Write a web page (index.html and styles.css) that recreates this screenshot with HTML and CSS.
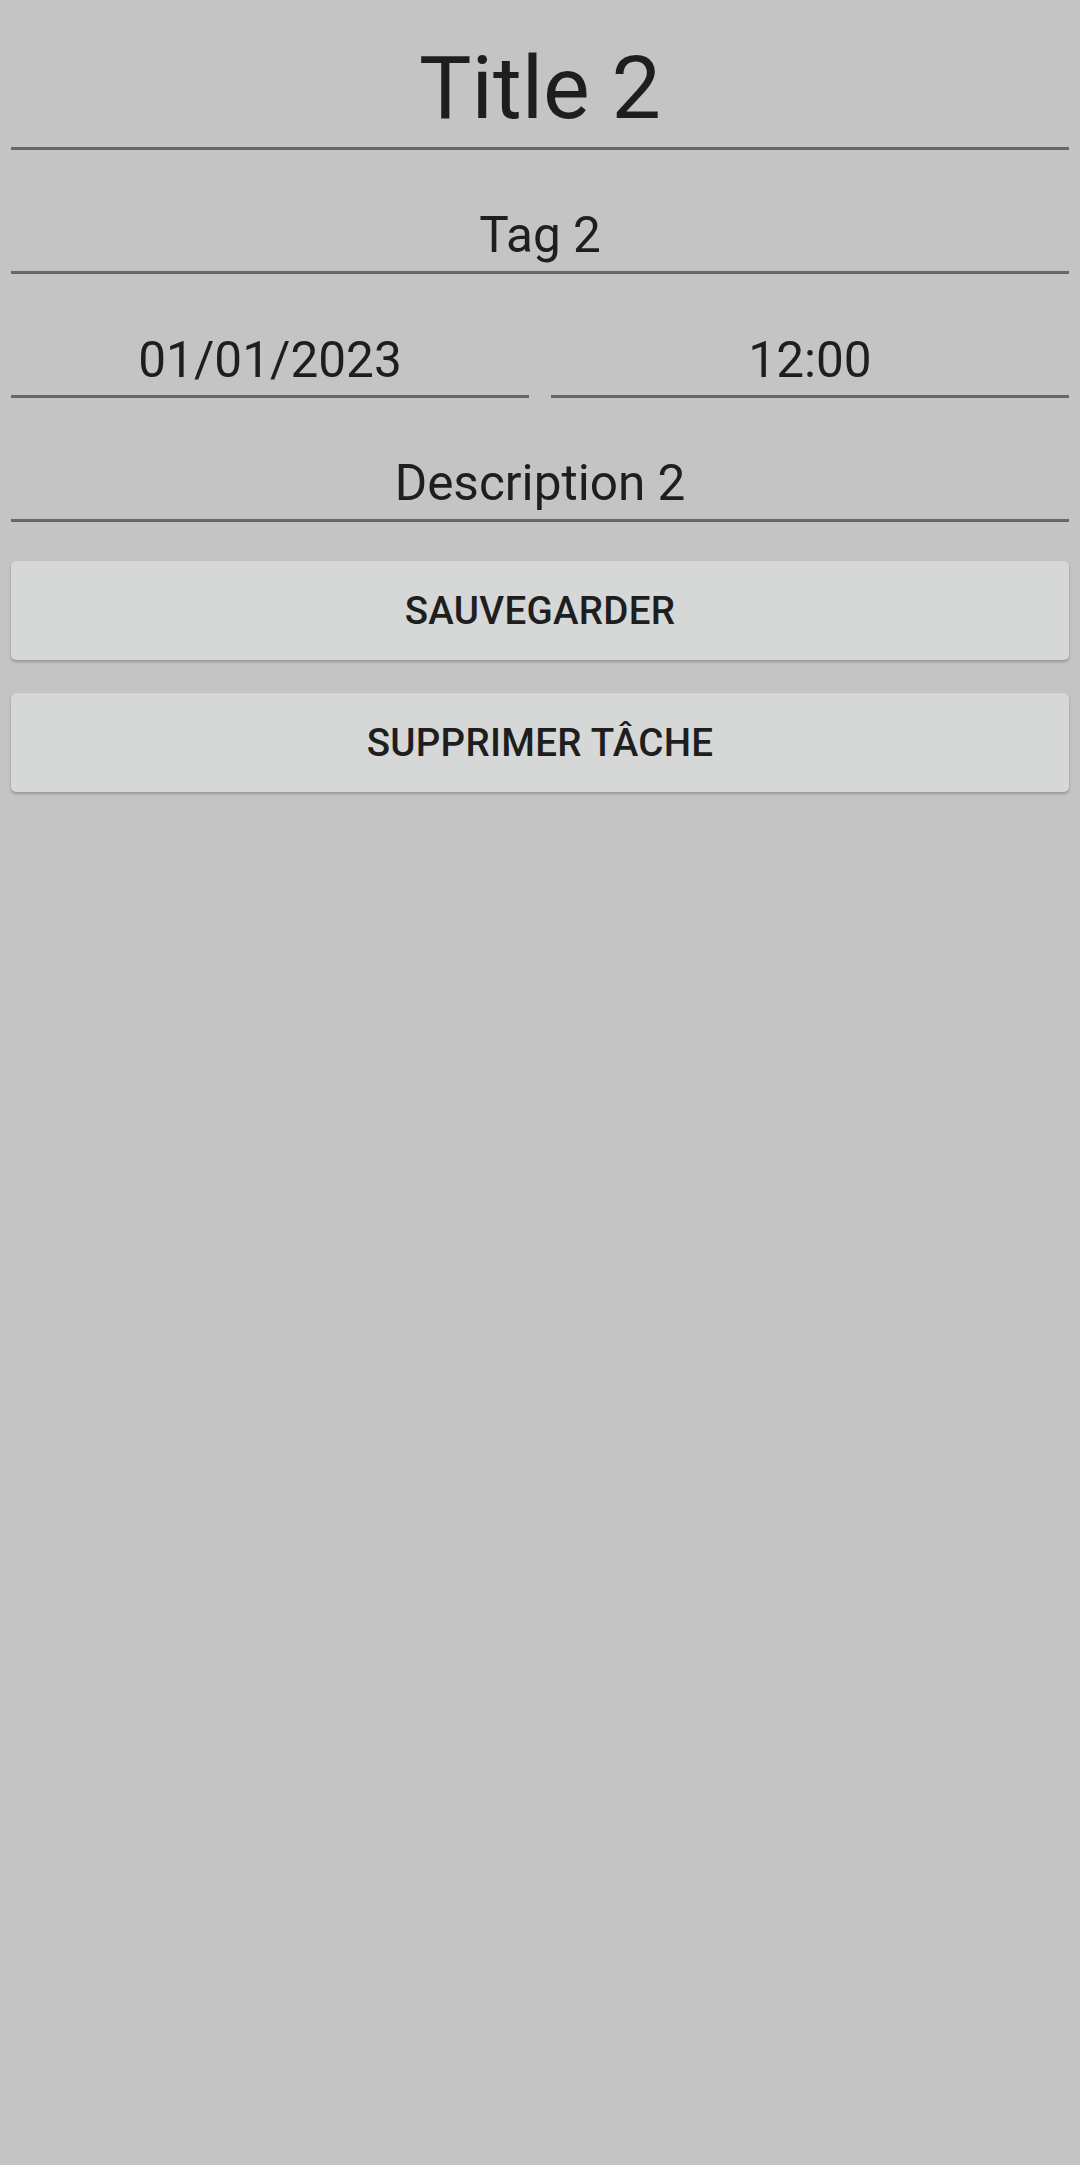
FILE: index.html
```html
<!DOCTYPE html>
<html lang="fr">
<head>
<meta charset="utf-8">
<title>Tâche</title>
<link rel="stylesheet" href="styles.css">
</head>
<body>
<main class="form">
  <div class="field field-title"><span class="value title">Title 2</span></div>
  <div class="field field-tag"><span class="value">Tag 2</span></div>
  <div class="row">
    <div class="field field-date"><span class="value">01/01/2023</span></div>
    <div class="field field-date"><span class="value">12:00</span></div>
  </div>
  <div class="field field-desc"><span class="value">Description 2</span></div>
  <button class="btn btn-save" type="button">SAUVEGARDER</button>
  <button class="btn btn-delete" type="button">SUPPRIMER TÂCHE</button>
</main>
</body>
</html>
```

FILE: styles.css
```css
html, body {
  margin: 0;
  padding: 0;
  background: #c4c4c4;
}
body {
  font-family: Roboto, "Noto Sans", "Liberation Sans", sans-serif;
  color: #1e1e1e;
  width: 1080px;
  min-height: 2165px;
}
.form {
  display: flex;
  flex-direction: column;
  padding: 0 11px;
}
.field {
  display: flex;
  justify-content: center;
  border-bottom: 3px solid #676767;
}
.value {
  font-size: 49.5px;
  line-height: 58px;
  color: #1e1e1e;
}
.title {
  font-size: 88px;
  line-height: 103px;
}
.field-title {
  padding-top: 36px;
  padding-bottom: 8px;
}
.field-tag {
  padding-top: 56px;
  padding-bottom: 7px;
}
.row {
  display: flex;
  gap: 22px;
}
.field-date {
  flex: 1;
  padding-top: 57px;
  padding-bottom: 6px;
}
.field-desc {
  padding-top: 56px;
  padding-bottom: 7px;
}
.btn {
  display: block;
  width: 100%;
  height: 99px;
  border: none;
  border-radius: 5px;
  background: #d6d8d8;
  color: #1e1e1e;
  font-family: Roboto, "Noto Sans", "Liberation Sans", sans-serif;
  font-weight: 500;
  font-size: 38.5px;
  letter-spacing: 0.3px;
  box-shadow: 0 2px 3px rgba(0, 0, 0, 0.22), 0 0 1px rgba(0, 0, 0, 0.12);
  padding: 0;
}
.btn-save {
  margin-top: 39px;
}
.btn-delete {
  margin-top: 33px;
}
```
